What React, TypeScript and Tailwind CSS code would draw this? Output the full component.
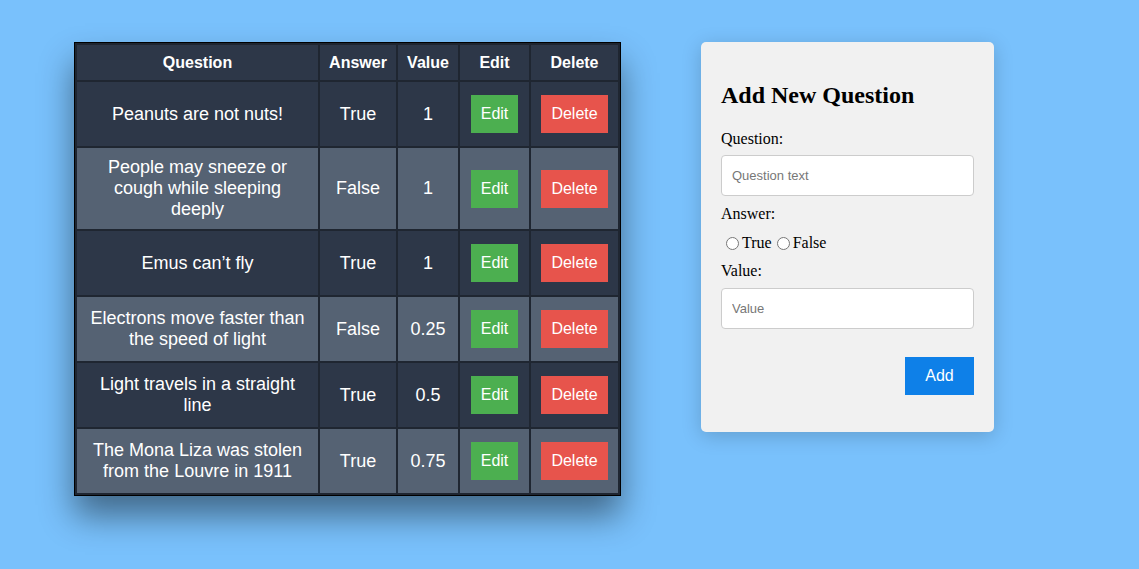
const questions = [
  { id: 1, text: 'Peanuts are not nuts!', answer: 'True', value: '1' },
  { id: 2, text: 'People may sneeze or cough while sleeping deeply', answer: 'False', value: '1' },
  { id: 3, text: 'Emus can\u2019t fly', answer: 'True', value: '1' },
  { id: 4, text: 'Electrons move faster than the speed of light', answer: 'False', value: '0.25' },
  { id: 5, text: 'Light travels in a straight line', answer: 'True', value: '0.5' },
  { id: 6, text: 'The Mona Liza was stolen from the Louvre in 1911', answer: 'True', value: '0.75' },
]

function QuestionTable() {
  return (
    <div className="border border-black shadow-[0_20px_32px_rgba(0,0,0,0.45)] shrink-0">
      <table className="table-fixed border-collapse text-white font-['Liberation_Sans',Arial,sans-serif] w-[543px]">
        <colgroup>
          <col className="w-[243px]" />
          <col className="w-[78px]" />
          <col className="w-[62px]" />
          <col className="w-[71px]" />
          <col className="w-[89px]" />
        </colgroup>
        <thead>
          <tr className="bg-[#2d3748] h-[37px]">
            {['Question', 'Answer', 'Value', 'Edit', 'Delete'].map((h) => (
              <th key={h} className="border-2 border-[#1f2631] text-[16px] font-bold px-1 text-center">
                {h}
              </th>
            ))}
          </tr>
        </thead>
        <tbody>
          {questions.map((q, i) => (
            <tr key={q.id} className={i % 2 === 0 ? 'bg-[#2d3748]' : 'bg-[#556273]'}>
              <td className="border-2 border-[#1f2631] h-[66px] px-3 py-[9px] text-center text-[18px] leading-[21px]">
                {q.text}
              </td>
              <td className="border-2 border-[#1f2631] text-center text-[18px]">{q.answer}</td>
              <td className="border-2 border-[#1f2631] text-center text-[18px]">{q.value}</td>
              <td className="border-2 border-[#1f2631] text-center">
                <button className="bg-[#4caf50] text-white text-[16px] h-[38px] w-[47px] align-middle">Edit</button>
              </td>
              <td className="border-2 border-[#1f2631] text-center">
                <button className="bg-[#e7544c] text-white text-[16px] h-[38px] w-[67px] align-middle">Delete</button>
              </td>
            </tr>
          ))}
        </tbody>
      </table>
    </div>
  )
}

function AddQuestionForm() {
  return (
    <div className="w-[293px] h-[390px] bg-[#f1f1f1] rounded-[5px] shadow-[0_4px_20px_rgba(0,0,0,0.18)] px-5 pt-[39px] font-['Liberation_Serif','Times_New_Roman',serif] text-black shrink-0">
      <h2 className="text-[24px] font-bold leading-[28px] mb-[21px]">Add New Question</h2>
      <label className="block text-[16px] leading-[18px] mb-[7px]">Question:</label>
      <input
        placeholder="Question text"
        className="block w-[253px] h-[41px] bg-white border border-[#cccccc] rounded-[4px] px-[10px] text-[13px] font-['Liberation_Sans',Arial,sans-serif] placeholder:text-[#777]"
      />
      <label className="block text-[16px] leading-[18px] mt-[9px] mb-[11px]">Answer:</label>
      <div className="flex items-center text-[16px] leading-[18px] pl-[5px]">
        <input type="radio" name="answer" className="w-[13px] h-[13px] m-0 mr-[3px]" />
        <span>True</span>
        <input type="radio" name="answer" className="w-[13px] h-[13px] m-0 ml-[5px] mr-[3px]" />
        <span>False</span>
      </div>
      <label className="block text-[16px] leading-[18px] mt-[10px] mb-[8px]">Value:</label>
      <input
        placeholder="Value"
        className="block w-[253px] h-[41px] bg-white border border-[#cccccc] rounded-[4px] px-[10px] text-[13px] font-['Liberation_Sans',Arial,sans-serif] placeholder:text-[#777]"
      />
      <div className="flex justify-end w-[253px] mt-[28px]">
        <button className="bg-[#0e80e8] text-white text-[16px] font-['Liberation_Sans',Arial,sans-serif] w-[69px] h-[38px]">
          Add
        </button>
      </div>
    </div>
  )
}

export default function App() {
  return (
    <div className="min-h-screen w-full bg-[#79c1fc] flex items-start gap-[80px] pl-[74px] pt-[42px]">
      <QuestionTable />
      <AddQuestionForm />
    </div>
  )
}
